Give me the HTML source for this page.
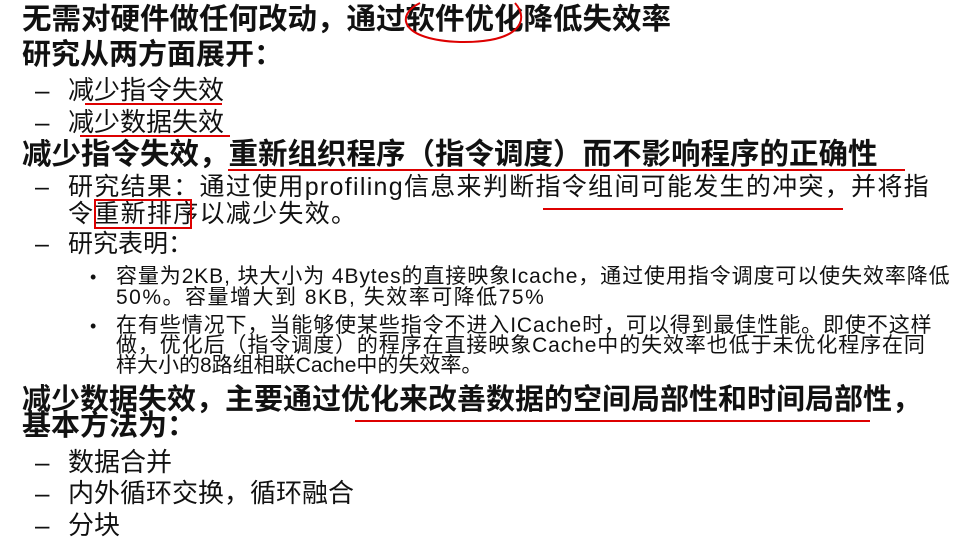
<!DOCTYPE html>
<html><head><meta charset="utf-8"><style>
body{margin:0;width:966px;height:540px;background:#fff;position:relative;overflow:hidden;font-family:"Liberation Sans","Noto Sans CJK SC",sans-serif;color:#111}
.l{position:absolute;white-space:nowrap;line-height:1}
.b{font-weight:bold}
.r{position:absolute;background:#d00;height:2px}
</style></head><body>
<div class="l b" style="left:22px;top:5px;font-size:29.5px">无需对硬件做任何改动，通过软件优化降低失效率</div>
<div class="l b" style="left:22px;top:41px;font-size:29px">研究从两方面展开：</div>
<div class="l" style="left:35px;top:77px;font-size:26px">–</div>
<div class="l" style="left:68px;top:77px;font-size:26px">减少指令失效</div>
<div class="l" style="left:35px;top:109px;font-size:26px">–</div>
<div class="l" style="left:68px;top:109px;font-size:26px">减少数据失效</div>
<div class="l b" style="left:22px;top:140px;font-size:29.5px">减少指令失效，重新组织程序（指令调度）而不影响程序的正确性</div>
<div class="l" style="left:35px;top:175px;font-size:25px">–</div>
<div class="l" style="left:68px;top:175px;font-size:25px;letter-spacing:1.3px">研究结果：通过使用profiling信息来判断指令组间可能发生的冲突，并将指</div>
<div class="l" style="left:68px;top:202px;font-size:25px;letter-spacing:1.3px">令重新排序以减少失效。</div>
<div class="l" style="left:35px;top:232px;font-size:25px">–</div>
<div class="l" style="left:68px;top:232px;font-size:25px">研究表明：</div>
<div class="l" style="left:90px;top:268px;font-size:18px">•</div>
<div class="l" style="left:116px;top:266px;font-size:21px;letter-spacing:0.9px">容量为2KB, 块大小为 4Bytes的直接映象Icache，通过使用指令调度可以使失效率降低</div>
<div class="l" style="left:116px;top:287px;font-size:21px;letter-spacing:1.5px">50%。容量增大到 8KB, 失效率可降低75%</div>
<div class="l" style="left:90px;top:317px;font-size:18px">•</div>
<div class="l" style="left:116px;top:315px;font-size:21px;letter-spacing:0.9px">在有些情况下，当能够使某些指令不进入ICache时，可以得到最佳性能。即使不这样</div>
<div class="l" style="left:116px;top:335px;font-size:21px;letter-spacing:0.9px">做，优化后（指令调度）的程序在直接映象Cache中的失效率也低于未优化程序在同</div>
<div class="l" style="left:116px;top:355px;font-size:21px">样大小的8路组相联Cache中的失效率。</div>
<div class="l b" style="left:22px;top:386px;font-size:29px">减少数据失效，主要通过优化来改善数据的空间局部性和时间局部性，</div>
<div class="l b" style="left:22px;top:412px;font-size:29px">基本方法为：</div>
<div class="l" style="left:35px;top:449px;font-size:26px">–</div>
<div class="l" style="left:68px;top:449px;font-size:26px">数据合并</div>
<div class="l" style="left:35px;top:480px;font-size:26px">–</div>
<div class="l" style="left:68px;top:480px;font-size:26px">内外循环交换，循环融合</div>
<div class="l" style="left:35px;top:512px;font-size:26px">–</div>
<div class="l" style="left:68px;top:512px;font-size:26px">分块</div>
<svg style="position:absolute;left:0;top:0" width="966" height="540">
<path d="M420 3 C395 15 400 40 460 42 C520 43 530 20 515 3" fill="none" stroke="#d00" stroke-width="2"/>
</svg>
<div class="r" style="left:85px;top:103px;width:137px"></div>
<div class="r" style="left:80px;top:135px;width:150px"></div>
<div class="r" style="left:228px;top:169px;width:677px"></div>
<div class="r" style="left:543px;top:208px;width:300px"></div>
<div style="position:absolute;left:94px;top:199px;width:98px;height:30px;border:2px solid #d00;box-sizing:border-box"></div>
<div class="r" style="left:355px;top:420px;width:515px"></div>
</body></html>
